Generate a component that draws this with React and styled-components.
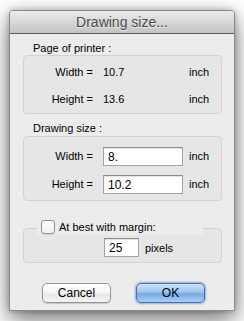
import React from 'react';
import styled, { createGlobalStyle } from 'styled-components';

const GlobalStyle = createGlobalStyle`
  html, body {
    margin: 0;
    padding: 0;
    background: #ffffff;
  }
  body {
    font-family: "Liberation Sans", Arial, sans-serif;
    font-size: 11px;
    color: #000;
  }
`;

const Page = styled.div`
  width: 244px;
  height: 321px;
  padding: 10px 9px 0 9px;
  box-sizing: border-box;
  overflow: hidden;
`;

const Window = styled.div`
  width: 226px;
  height: 301px;
  box-sizing: border-box;
  background: #ececec;
  border: 1px solid #8a8a8a;
  border-radius: 4px 4px 0 0;
  box-shadow: 0 9px 24px rgba(0, 0, 0, 0.55), 0 0 6px rgba(0, 0, 0, 0.25);
  display: flex;
  flex-direction: column;
`;

const TitleBar = styled.div`
  height: 22px;
  border-bottom: 1px solid #5e5e5e;
  border-radius: 3px 3px 0 0;
  background: linear-gradient(#ececec, #d3d3d3 60%, #c4c4c4);
  display: flex;
  align-items: center;
  justify-content: center;
  font-size: 14px;
  color: #4a4a4a;
  text-shadow: 0 1px 0 rgba(255, 255, 255, 0.6);
`;

const Content = styled.div`
  padding: 8px 12px 0 13px;
  display: flex;
  flex-direction: column;
`;

const GroupTitle = styled.div`
  height: 13px;
  line-height: 13px;
  padding-left: 10px;
  margin-top: ${(p) => p.$top || 0}px;
`;

const Box = styled.div`
  position: relative;
  border: 1px solid #d2d2d2;
  border-radius: 4px;
  background: #e6e6e6;
  padding: ${(p) => p.$pad};
  margin-top: ${(p) => p.$top || 0}px;
  display: flex;
  flex-direction: column;
  gap: ${(p) => p.$gap || 0}px;
`;

const Row = styled.div`
  height: 20px;
  display: grid;
  grid-template-columns: 73px 80px auto;
  column-gap: 6px;
  align-items: center;
`;

const FieldLabel = styled.span`
  text-align: right;
  padding-right: 1px;
  white-space: pre;
`;

const Value = styled.span`
  padding-left: 0;
`;

const Unit = styled.span`
  padding-left: ${(p) => p.$pad || 0}px;
`;

const Input = styled.input`
  width: ${(p) => p.$w || 80}px;
  height: 19px;
  box-sizing: border-box;
  border: 1px solid #a3a3a3;
  border-top-color: #8c8c8c;
  box-shadow: inset 0 1px 1px rgba(0, 0, 0, 0.12);
  background: #fff;
  font: inherit;
  font-size: 12px;
  padding: 1px 4px 0 4px;
  margin: 0;
  outline: none;
  color: #000;
`;

const Legend = styled.label`
  position: absolute;
  top: -11px;
  left: 13px;
  width: 166px;
  height: 17px;
  padding-left: 4px;
  box-sizing: border-box;
  background: #ececec;
  display: flex;
  align-items: center;
  gap: 4px;
`;

const CheckBox = styled.span`
  width: 14px;
  height: 14px;
  box-sizing: border-box;
  border: 1px solid #8f8f8f;
  border-radius: 3px;
  background: linear-gradient(#ffffff, #f0f0f0);
  box-shadow: 0 1px 1px rgba(0, 0, 0, 0.1);
`;

const MarginRow = styled.div`
  height: 19px;
  display: flex;
  align-items: center;
  gap: 6px;
  padding-left: 80px;
`;

const Buttons = styled.div`
  margin-top: 20px;
  display: flex;
  gap: 25px;
  padding-left: 19px;
`;

const Button = styled.button`
  width: 69px;
  height: 20px;
  box-sizing: border-box;
  border-radius: 5px;
  font: inherit;
  font-size: 12px;
  color: #000;
  padding: 0;
  border: 1px solid ${(p) => (p.$primary ? '#4f6d9d' : '#949494')};
  background: ${(p) =>
    p.$primary
      ? 'linear-gradient(#cfe2f8, #9cc3ef 45%, #77aae7 55%, #a9d0f6)'
      : 'linear-gradient(#ffffff, #f4f4f4 50%, #e8e8e8 55%, #f3f3f3)'};
  box-shadow: ${(p) =>
    p.$primary
      ? '0 0 2px 1px rgba(70, 130, 220, 0.6)'
      : '0 1px 1px rgba(0, 0, 0, 0.15)'};
`;

export default function App() {
  return (
    <Page>
      <GlobalStyle />
      <Window>
        <TitleBar>Drawing size...</TitleBar>
        <Content>
          <GroupTitle>Page of printer :</GroupTitle>
          <Box $pad="6px 0 4px 0" $gap={7}>
            <Row>
              <FieldLabel>Width = </FieldLabel>
              <Value>10.7</Value>
              <Unit>inch</Unit>
            </Row>
            <Row>
              <FieldLabel>Height = </FieldLabel>
              <Value>13.6</Value>
              <Unit>inch</Unit>
            </Row>
          </Box>

          <GroupTitle $top={8}>Drawing size :</GroupTitle>
          <Box $pad="9px 0 6px 0" $gap={8} $top={1}>
            <Row>
              <FieldLabel>Width = </FieldLabel>
              <Input defaultValue="8." />
              <Unit>inch</Unit>
            </Row>
            <Row>
              <FieldLabel>Height = </FieldLabel>
              <Input defaultValue="10.2" />
              <Unit>inch</Unit>
            </Row>
          </Box>

          <Box $pad="9px 0 5px 0" $top={27}>
            <Legend>
              <CheckBox />
              At best with margin:
            </Legend>
            <MarginRow>
              <Input $w={35} defaultValue="25" />
              <span>pixels</span>
            </MarginRow>
          </Box>

          <Buttons>
            <Button>Cancel</Button>
            <Button $primary>OK</Button>
          </Buttons>
        </Content>
      </Window>
    </Page>
  );
}
